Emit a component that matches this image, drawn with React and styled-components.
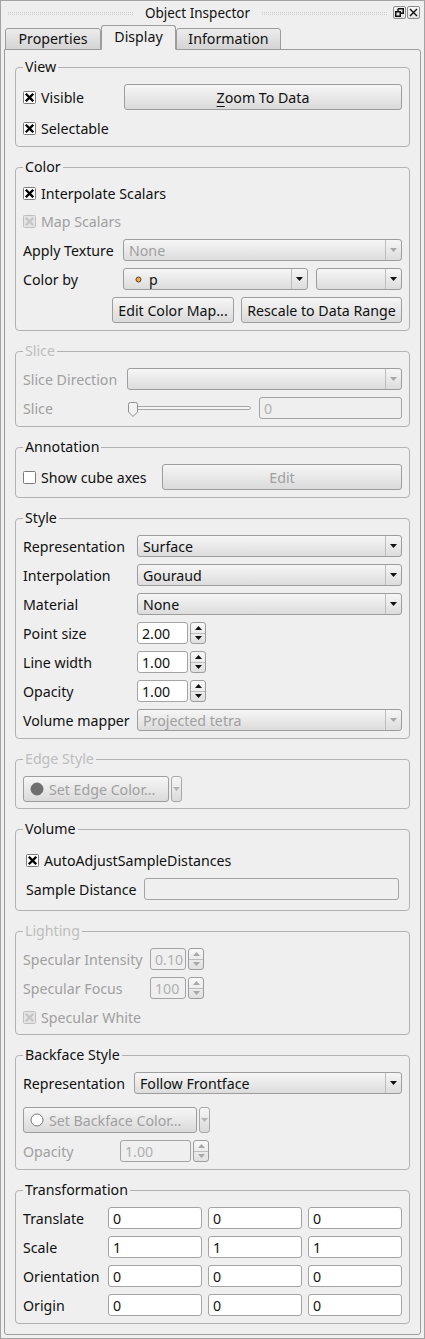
import React from 'react'
import styled, { createGlobalStyle } from 'styled-components'

const GlobalStyle = createGlobalStyle`
  html, body { margin: 0; padding: 0; background: #efefef; }
  body {
    font-family: "Noto Sans", "DejaVu Sans", sans-serif;
    font-size: 14.2px;
    color: #111;
  }
`

const Window = styled.div`
  width: 425px;
  height: 1339px;
  box-sizing: border-box;
  border: 1px solid #a3a3a3;
  background: #efefef;
  display: flex;
  flex-direction: column;
  padding: 0 3px 3px 3px;
`

const TitleBar = styled.div`
  height: 23px;
  display: flex;
  align-items: center;
  padding: 0 1px 0 4px;
`

const Grip = styled.span`
  flex: 1;
  height: 1px;
  border-top: 1px dotted #cbcbcb;
  border-bottom: 1px dotted #cbcbcb;
  margin-top: 2px;
`

const TitleText = styled.span`
  margin: 0 12px;
  white-space: nowrap;
  font-size: 13.5px;
`

const WinButtons = styled.div`
  display: flex;
  gap: 1px;
  margin-left: 6px;
`

const WinButton = styled.span`
  width: 13px;
  height: 13px;
  box-sizing: border-box;
  border: 1px solid #8c8c8c;
  border-radius: 2px;
  background: linear-gradient(#f7f7f7, #e2e2e2);
  display: flex;
  align-items: center;
  justify-content: center;
`

const TabBar = styled.div`
  height: 26px;
  margin-bottom: -1px;
  display: flex;
  align-items: flex-end;
  padding-left: 1px;
  position: relative;
  z-index: 1;
`

const Tab = styled.div`
  width: ${p => p.$w}px;
  height: ${p => (p.$active ? 25 : 22)}px;
  box-sizing: border-box;
  display: flex;
  align-items: center;
  justify-content: center;
  padding-bottom: ${p => (p.$active ? 2 : 1)}px;
  border: 1px solid #9c9c9c;
  border-bottom: ${p => (p.$active ? '1px solid #efefef' : '1px solid #9c9c9c')};
  border-radius: 3px 3px 0 0;
  background: ${p => (p.$active ? '#efefef' : 'linear-gradient(#ececec, #d4d4d4)')};
`

const Pane = styled.div`
  flex: 1;
  border: 1px solid #9c9c9c;
  border-radius: 0 3px 3px 3px;
  padding: 9px 10px 0 10px;
  display: flex;
  flex-direction: column;
  gap: 12px;
`

const Group = styled.fieldset`
  margin: 0;
  min-width: 0;
  border: 1px solid #b2b2b2;
  border-radius: 4px;
  padding: ${p => p.$pt ?? 9}px 7px ${p => p.$pb ?? 7}px 7px;
  display: flex;
  flex-direction: column;
  gap: 7px;
`

const Legend = styled.legend`
  padding: 0 2px;
  line-height: 16px;
  color: ${p => (p.$disabled ? '#bdbdbd' : '#111')};
`

const Inner = styled.div`
  padding: 3px;
  display: flex;
  flex-direction: column;
  gap: 7px;
`

const Row = styled.div`
  display: flex;
  align-items: center;
  height: ${p => p.$h ?? 22}px;
  gap: ${p => p.$gap ?? 0}px;
  justify-content: ${p => (p.$end ? 'flex-end' : 'flex-start')};
  margin-top: ${p => p.$mt ?? 0}px;
`

const Label = styled.span`
  width: ${p => p.$w}px;
  flex: none;
  white-space: nowrap;
  color: ${p => (p.$disabled ? '#a0a0a0' : '#111')};
`

const CheckLabel = styled.label`
  display: flex;
  align-items: center;
  gap: 5px;
  white-space: nowrap;
  color: ${p => (p.$disabled ? '#a0a0a0' : '#111')};
  width: ${p => (p.$w ? p.$w + 'px' : 'auto')};
  flex: none;
  svg { flex: none; }
`

const Combo = styled.div`
  flex: ${p => (p.$w ? 'none' : 1)};
  width: ${p => (p.$w ? p.$w + 'px' : 'auto')};
  height: 22px;
  box-sizing: border-box;
  border: 1px solid #9d9d9d;
  border-radius: 3px;
  background: linear-gradient(#f6f6f6, #dcdcdc);
  display: flex;
  align-items: center;
  color: ${p => (p.$disabled ? '#a0a0a0' : '#111')};
`

const ComboText = styled.span`
  flex: 1;
  padding-left: 5px;
  display: flex;
  align-items: center;
  gap: 7px;
  white-space: nowrap;
  overflow: hidden;
`

const ComboIcon = styled.span`
  display: flex;
  margin-left: 6px;
`

const ComboArrow = styled.span`
  width: 15px;
  align-self: stretch;
  border-left: 1px solid #bdbdbd;
  display: flex;
  align-items: center;
  justify-content: center;
`

const Button = styled.div`
  width: ${p => p.$w}px;
  height: ${p => p.$h ?? 26}px;
  flex: none;
  box-sizing: border-box;
  border: 1px solid #9d9d9d;
  border-radius: 3px;
  background: linear-gradient(#f6f6f6, #dadada);
  display: flex;
  align-items: center;
  justify-content: center;
  white-space: nowrap;
  color: ${p => (p.$disabled ? '#a0a0a0' : '#111')};
  u { text-decoration: underline; text-underline-offset: 3px; }
`

const MenuButton = styled(Button)`
  justify-content: flex-start;
  padding-left: 6px;
  gap: 5px;
`

const MenuDrop = styled.div`
  width: 11px;
  height: 26px;
  box-sizing: border-box;
  margin-left: 2px;
  border: 1px solid #a8a8a8;
  border-radius: 3px;
  background: linear-gradient(#f6f6f6, #dadada);
  display: flex;
  align-items: center;
  justify-content: center;
`

const Edit = styled.div`
  flex: ${p => (p.$w ? 'none' : 1)};
  width: ${p => (p.$w ? p.$w + 'px' : 'auto')};
  height: 22px;
  box-sizing: border-box;
  border: 1px solid #a4a4a4;
  border-radius: 3px;
  background: ${p => (p.$disabled || p.$readonly ? '#efefef' : '#fff')};
  color: ${p => (p.$disabled ? '#b0b0b0' : '#111')};
  padding-left: 4px;
  display: flex;
  align-items: center;
  white-space: nowrap;
`

const Spin = styled.div`
  width: ${p => p.$w}px;
  flex: none;
  display: flex;
  gap: 2px;
  height: 22px;
`

const SpinButtons = styled.div`
  width: 16px;
  flex: none;
  box-sizing: border-box;
  border: 1px solid #9d9d9d;
  border-radius: 3px;
  background: linear-gradient(#f8f8f8, #e0e0e0);
  display: flex;
  flex-direction: column;
`

const SpinHalf = styled.span`
  flex: 1;
  display: flex;
  align-items: center;
  justify-content: center;
  & + & { border-top: 1px solid #bdbdbd; }
`

const SliderBox = styled.div`
  width: 125px;
  flex: none;
  height: 22px;
  margin-right: 7px;
`

const Tri = ({ up, color = '#111' }) => (
  <svg width="7" height="4" viewBox="0 0 7 4">
    <path d={up ? 'M0 4L7 4L3.5 0Z' : 'M0 0L7 0L3.5 4Z'} fill={color} />
  </svg>
)

const CheckIcon = ({ checked, disabled }) => (
  <svg width="13" height="13" viewBox="0 0 13 13">
    <rect x="0.5" y="0.5" width="12" height="12" rx="1"
      fill={disabled ? '#e4e4e4' : '#fff'} stroke={disabled ? '#c0c0c0' : '#7a7a7a'} />
    {checked && (
      <path d="M3.6 3.6L9.4 9.4M9.4 3.6L3.6 9.4"
        stroke={disabled ? '#c6c6c6' : '#000'} strokeWidth="2.3" strokeLinecap="square" />
    )}
  </svg>
)

const Check = ({ children, checked, disabled, w }) => (
  <CheckLabel $disabled={disabled} $w={w}>
    <CheckIcon checked={checked} disabled={disabled} />
    {children}
  </CheckLabel>
)

const Select = ({ children, disabled, w, icon }) => (
  <Combo $disabled={disabled} $w={w}>
    <ComboText>{icon && <ComboIcon>{icon}</ComboIcon>}{children}</ComboText>
    <ComboArrow><Tri color={disabled ? '#a8a8a8' : '#111'} /></ComboArrow>
  </Combo>
)

const SpinBox = ({ value, w, disabled }) => (
  <Spin $w={w}>
    <Edit $disabled={disabled}>{value}</Edit>
    <SpinButtons>
      <SpinHalf><Tri up color={disabled ? '#a8a8a8' : '#111'} /></SpinHalf>
      <SpinHalf><Tri color={disabled ? '#a8a8a8' : '#111'} /></SpinHalf>
    </SpinButtons>
  </Spin>
)

const Slider = () => (
  <SliderBox>
    <svg width="125" height="22" viewBox="0 0 125 22">
      <rect x="6.5" y="9.5" width="117" height="3" rx="1.5" fill="#f4f4f4" stroke="#a8a8a8" />
      <path d="M1.5 7.5Q1.5 5.5 3.5 5.5H8.5Q10.5 5.5 10.5 7.5V15L6 19.5L1.5 15Z" fill="#f2f2f2" stroke="#8e8e8e" />
    </svg>
  </SliderBox>
)

const Dot = ({ fill, stroke, r = 6 }) => (
  <svg width={r * 2 + 2} height={r * 2 + 2} viewBox={`0 0 ${r * 2 + 2} ${r * 2 + 2}`}>
    <circle cx={r + 1} cy={r + 1} r={r} fill={fill} stroke={stroke} />
  </svg>
)

const transform = [
  ['Translate', '0', '0', '0'],
  ['Scale', '1', '1', '1'],
  ['Orientation', '0', '0', '0'],
  ['Origin', '0', '0', '0'],
]

export default function App() {
  return (
    <>
      <GlobalStyle />
      <Window>
        <TitleBar>
          <Grip />
          <TitleText>Object Inspector</TitleText>
          <Grip />
          <WinButtons>
            <WinButton>
              <svg width="9" height="9" viewBox="0 0 9 9">
                <path d="M3 0.75H8.25V5.25H6M3 0.75V3M0.75 3.75H5.25V8.25H0.75Z" fill="none" stroke="#111" strokeWidth="1.5" />
              </svg>
            </WinButton>
            <WinButton>
              <svg width="9" height="9" viewBox="0 0 9 9">
                <path d="M1 1L8 8M8 1L1 8" stroke="#111" strokeWidth="1.4" />
              </svg>
            </WinButton>
          </WinButtons>
        </TitleBar>

        <TabBar>
          <Tab $w={96}>Properties</Tab>
          <Tab $w={75} $active>Display</Tab>
          <Tab $w={105}>Information</Tab>
        </TabBar>

        <Pane>
          <Group>
            <Legend>View</Legend>
            <Row $h={26}>
              <Check checked w={101}>Visible</Check>
              <Button $w={278}><u>Z</u>oom To Data</Button>
            </Row>
            <Row>
              <Check checked>Selectable</Check>
            </Row>
          </Group>

          <Group $pt={8}>
            <Legend>Color</Legend>
            <Row $h={21}><Check checked>Interpolate Scalars</Check></Row>
            <Row $h={21}><Check checked disabled>Map Scalars</Check></Row>
            <Row>
              <Label $w={100}>Apply Texture</Label>
              <Select disabled>None</Select>
            </Row>
            <Row $gap={8}>
              <Label $w={92}>Color by</Label>
              <Select w={185} icon={<Dot r={2.5} fill="#f7a94a" stroke="#5a4020" />}>p</Select>
              <Select />
            </Row>
            <Row $h={26} $end $gap={7}>
              <Button $w={122}>Edit Color Map...</Button>
              <Button $w={161}>Rescale to Data Range</Button>
            </Row>
          </Group>

          <Group>
            <Legend $disabled>Slice</Legend>
            <Row>
              <Label $w={104} $disabled>Slice Direction</Label>
              <Select disabled />
            </Row>
            <Row>
              <Label $w={104} $disabled>Slice</Label>
              <Slider />
              <Edit $disabled>0</Edit>
            </Row>
          </Group>

          <Group>
            <Legend>Annotation</Legend>
            <Row $h={26}>
              <Check w={139}>Show cube axes</Check>
              <Button $w={240} $disabled>Edit</Button>
            </Row>
          </Group>

          <Group>
            <Legend>Style</Legend>
            <Row>
              <Label $w={114}>Representation</Label>
              <Select>Surface</Select>
            </Row>
            <Row>
              <Label $w={114}>Interpolation</Label>
              <Select>Gouraud</Select>
            </Row>
            <Row>
              <Label $w={114}>Material</Label>
              <Select>None</Select>
            </Row>
            <Row>
              <Label $w={114}>Point size</Label>
              <SpinBox w={69} value="2.00" />
            </Row>
            <Row>
              <Label $w={114}>Line width</Label>
              <SpinBox w={69} value="1.00" />
            </Row>
            <Row>
              <Label $w={114}>Opacity</Label>
              <SpinBox w={69} value="1.00" />
            </Row>
            <Row>
              <Label $w={114}>Volume mapper</Label>
              <Select disabled>Projected tetra</Select>
            </Row>
          </Group>

          <Group $pb={6}>
            <Legend $disabled>Edge Style</Legend>
            <Row $h={26}>
              <MenuButton $w={146} $disabled>
                <Dot r={6} fill="#6f6f6f" stroke="#6a6a6a" />
                Set Edge Color...
              </MenuButton>
              <MenuDrop><Tri color="#b4b4b4" /></MenuDrop>
            </Row>
          </Group>

          <Group>
            <Legend>Volume</Legend>
            <Inner>
              <Row><Check checked>AutoAdjustSampleDistances</Check></Row>
              <Row>
                <Label $w={118}>Sample Distance</Label>
                <Edit $readonly />
              </Row>
            </Inner>
          </Group>

          <Group $pb={6}>
            <Legend $disabled>Lighting</Legend>
            <Row>
              <Label $w={127} $disabled>Specular Intensity</Label>
              <SpinBox w={54} value="0.10" disabled />
            </Row>
            <Row>
              <Label $w={127} $disabled>Specular Focus</Label>
              <SpinBox w={54} value="100" disabled />
            </Row>
            <Row><Check checked disabled>Specular White</Check></Row>
          </Group>

          <Group>
            <Legend>Backface Style</Legend>
            <Row>
              <Label $w={111}>Representation</Label>
              <Select>Follow Frontface</Select>
            </Row>
            <Row $h={26} $mt={6}>
              <MenuButton $w={174} $disabled>
                <Dot r={6} fill="#fff" stroke="#7a7a7a" />
                Set Backface Color...
              </MenuButton>
              <MenuDrop><Tri color="#b4b4b4" /></MenuDrop>
            </Row>
            <Row>
              <Label $w={97} $disabled>Opacity</Label>
              <SpinBox w={89} value="1.00" disabled />
            </Row>
          </Group>

          <Group>
            <Legend>Transformation</Legend>
            {transform.map(([name, a, b, c]) => (
              <Row key={name} $gap={6}>
                <Label $w={79}>{name}</Label>
                <Edit>{a}</Edit>
                <Edit>{b}</Edit>
                <Edit>{c}</Edit>
              </Row>
            ))}
          </Group>
        </Pane>
      </Window>
    </>
  )
}
